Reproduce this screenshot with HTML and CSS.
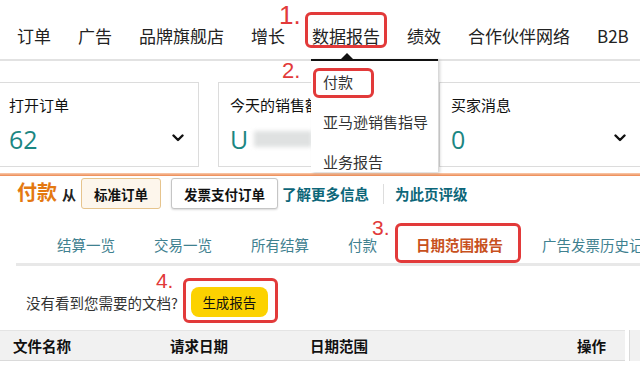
FILE: index.html
```html
<!DOCTYPE html>
<html lang="zh-CN">
<head>
    <meta charset="UTF-8">
    <meta name="viewport" content="width=device-width, initial-scale=1.0">
    <title>付款 - 日期范围报告</title>
    <link rel="stylesheet" href="styles.css">
</head>
<body>
    <header class="topnav">
        <span class="nav-item">订单</span>
        <span class="nav-item">广告</span>
        <span class="nav-item">品牌旗舰店</span>
        <span class="nav-item">增长</span>
        <span class="nav-item nav-open">
            数据报告
            <span class="mark-num num-1">1.</span>
            <span class="mark-box box-1"></span>
            <div class="dropdown">
                <span class="caret"></span>
                <div class="drop-item first">
                    付款
                    <span class="mark-num num-2">2.</span>
                    <span class="mark-box box-2"></span>
                </div>
                <div class="drop-item">亚马逊销售指导</div>
                <div class="drop-item">业务报告</div>
            </div>
        </span>
        <span class="nav-item">绩效</span>
        <span class="nav-item">合作伙伴网络</span>
        <span class="nav-item">B2B</span>
    </header>

    <section class="cards">
        <div class="card">
            <div class="card-label">打开订单</div>
            <div class="card-row">
                <span class="card-value">62</span>
                <svg class="chev" width="12" height="8" viewBox="0 0 12 8"><polyline points="1.5,1.5 6,6 10.5,1.5" fill="none" stroke="#111" stroke-width="2.4" stroke-linecap="round" stroke-linejoin="round"/></svg>
            </div>
        </div>
        <div class="card">
            <div class="card-label">今天的销售额</div>
            <div class="card-row">
                <span class="card-value">U<span class="blurred"></span></span>
            </div>
        </div>
        <div class="card">
            <div class="card-label">买家消息</div>
            <div class="card-row">
                <span class="card-value">0</span>
                <svg class="chev" width="12" height="8" viewBox="0 0 12 8"><polyline points="1.5,1.5 6,6 10.5,1.5" fill="none" stroke="#111" stroke-width="2.4" stroke-linecap="round" stroke-linejoin="round"/></svg>
            </div>
        </div>
    </section>

    <div class="orange-rule"></div>

    <section class="title-row">
        <h1 class="page-title">付款</h1>
        <span class="from">从</span>
        <button class="btn btn-active">标准订单</button>
        <button class="btn">发票支付订单</button>
        <a class="link">了解更多信息</a>
        <span class="sep"></span>
        <a class="link">为此页评级</a>
    </section>

    <nav class="tabs">
        <span class="tab">结算一览</span>
        <span class="tab">交易一览</span>
        <span class="tab">所有结算</span>
        <span class="tab">付款</span>
        <span class="tab tab-active">
            日期范围报告
            <span class="mark-num num-3">3.</span>
            <span class="mark-box box-3"></span>
        </span>
        <span class="tab">广告发票历史记录</span>
    </nav>

    <section class="hint-row">
        <span class="hint">没有看到您需要的文档?</span>
        <span class="gen-wrap">
            <button class="btn-yellow">生成报告</button>
            <span class="mark-num num-4">4.</span>
            <span class="mark-box box-4"></span>
        </span>
    </section>

    <div class="table-head">
        <div class="th-row">
            <span>文件名称</span>
            <span>请求日期</span>
            <span>日期范围</span>
            <span>操作</span>
        </div>
        <div class="th-more"></div>
    </div>
</body>
</html>
```

FILE: styles.css
```css
body {
    margin: 0;
    background: white;
    color: #111;
    font-family: "Noto Sans CJK SC", "Noto Sans", sans-serif;
    overflow: hidden;
}

/* top navigation */
.topnav {
    display: flex;
    gap: 27px;
    height: 61px;
    padding-left: 17px;
    border-bottom: 2px solid #e2e2e2;
    box-sizing: border-box;
}
.nav-item {
    position: relative;
    padding-top: 24px;
    font-size: 17px;
    line-height: 24px;
    color: #222;
    white-space: nowrap;
}
.nav-open {
    z-index: 5;
}

/* dropdown under 数据报告 */
.dropdown {
    position: absolute;
    top: 59px;
    left: -1px;
    width: 127px;
    height: 113px;
    background: white;
    border-top: 2px solid #111;
    box-sizing: border-box;
    padding-top: 1px;
    box-shadow: 2px 1px 3px rgba(0, 0, 0, 0.18);
}
.caret {
    position: absolute;
    top: -8px;
    left: 30px;
    border-left: 6px solid transparent;
    border-right: 6px solid transparent;
    border-bottom: 6px solid #111;
}
.drop-item {
    position: relative;
    padding: 10px 0 10px 12px;
    font-size: 15px;
    line-height: 20px;
    color: #333;
    white-space: nowrap;
}
.dropdown .drop-item:last-child {
    overflow: hidden;
}

/* red annotations */
.mark-box {
    position: absolute;
    border: 3px solid #e23a3a;
    border-radius: 6px;
    box-sizing: border-box;
    pointer-events: none;
}
.mark-num {
    position: absolute;
    color: #e23a3a;
    font-family: "Liberation Sans", Arial, sans-serif;
    font-weight: normal;
    line-height: 1;
    white-space: nowrap;
}
.box-1 { left: -7px; top: 12px; width: 82px; height: 36px; }
.num-1 { left: -33px; top: 2px; font-size: 26px; }
.box-2 { left: 2px; top: 6px; width: 61px; height: 30px; }
.num-2 { left: -29px; top: -2px; font-size: 22px; }
.box-3 { left: -21px; top: 14px; width: 126px; height: 40px; }
.num-3 { left: -44px; top: 8px; font-size: 21px; }
.box-4 { left: -8px; top: -9px; width: 95px; height: 45px; }
.num-4 { left: -35px; top: -17px; font-size: 21px; }

/* summary cards */
.cards {
    display: grid;
    grid-template-columns: 202px 202px 202px;
    gap: 19px;
    margin: 21px 0 0 -3px;
}
.card {
    height: 85px;
    box-sizing: border-box;
    border: 1px solid #dcdcdc;
    padding: 12px 14px 0 11px;
}
.card-label {
    font-size: 15px;
    line-height: 20px;
    color: #111;
    white-space: nowrap;
}
.card-row {
    display: flex;
    align-items: center;
    justify-content: space-between;
    margin-top: 9px;
    height: 30px;
}
.card-value {
    display: flex;
    align-items: center;
    font-family: "Open Sans", "Noto Sans", sans-serif;
    font-size: 25px;
    color: #1b8682;
}
.blurred {
    display: inline-block;
    width: 58px;
    height: 16px;
    margin-left: 6px;
    background: #dfe1e1;
    filter: blur(2px);
}
.chev {
    margin-top: -2px;
}

.orange-rule {
    height: 3px;
    margin-top: 6px;
    background: linear-gradient(#f9cdb0, #ec8750);
}

/* title row */
.title-row {
    display: flex;
    align-items: center;
    height: 31px;
    margin-top: 2px;
    padding-left: 17px;
}
.page-title {
    margin: -4px 0 0 0;
    font-size: 20px;
    font-weight: bold;
    color: #e47911;
}
.from {
    margin: 0 5px 0 5px;
    font-size: 14px;
    font-weight: bold;
    color: #222;
}
.btn {
    height: 31px;
    padding: 0 12px;
    margin-right: 10px;
    font-family: inherit;
    font-size: 13.5px;
    font-weight: bold;
    color: #111;
    background: white;
    border: 1px solid #c5c5c5;
    border-radius: 3px;
    box-shadow: 0 1px 2px rgba(0, 0, 0, 0.15);
}
.btn-active {
    background: #fdf6ec;
    border-color: #e6c48d;
    box-shadow: none;
}
.link {
    font-size: 14.5px;
    font-weight: bold;
    color: #0c6679;
    margin-left: -6px;
}
.sep {
    width: 1px;
    height: 20px;
    background: #ddd;
    margin: 0 11px 0 14px;
}
.sep + .link {
    margin-left: 0;
}

/* tabs */
.tabs {
    display: flex;
    gap: 39px;
    margin-left: 16px;
    padding-left: 41px;
    border-bottom: 3px solid #e8e8e8;
}
.tab {
    position: relative;
    padding: 26px 0 8px 0;
    font-size: 14.5px;
    line-height: 20px;
    color: #3f8190;
    white-space: nowrap;
}
.tab-active {
    color: #c8511d;
    font-weight: bold;
}

/* generate report row */
.hint-row {
    display: flex;
    align-items: center;
    height: 30px;
    margin-top: 21px;
    padding-left: 26px;
}
.hint {
    font-size: 14.5px;
    color: #333;
    margin-right: 13px;
}
.gen-wrap {
    position: relative;
    display: flex;
}
.btn-yellow {
    width: 77px;
    height: 30px;
    font-family: inherit;
    font-size: 13.5px;
    color: #111;
    background: #fcd200;
    border: none;
    border-radius: 8px;
}

/* table header */
.table-head {
    display: flex;
    gap: 4px;
    margin-top: 13px;
}
.th-row {
    display: grid;
    grid-template-columns: 157px 140px 267px 1fr;
    width: 633px;
    height: 31px;
    box-sizing: border-box;
    padding-left: 13px;
    align-items: center;
    background: #f1f1f1;
    border-top: 1px solid #e4e4e4;
    border-bottom: 1px solid #dadada;
    font-size: 14.5px;
    font-weight: bold;
    color: #111;
}
.th-more {
    width: 10px;
    height: 31px;
    background: #f1f1f1;
    border-left: 1px solid #dadada;
}
```
